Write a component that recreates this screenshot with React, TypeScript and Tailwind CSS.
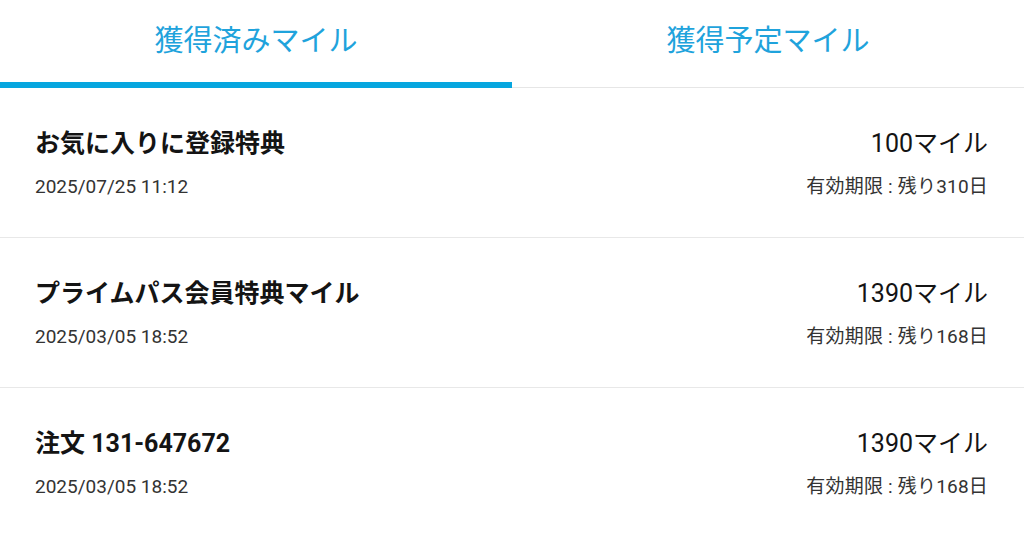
const font = { fontFamily: 'Roboto, "Noto Sans CJK JP", sans-serif' };

interface MileEntry {
  title: string;
  date: string;
  miles: string;
  expiry: string;
}

const entries: MileEntry[] = [
  { title: 'お気に入りに登録特典', date: '2025/07/25 11:12', miles: '100マイル', expiry: '有効期限 : 残り310日' },
  { title: 'プライムパス会員特典マイル', date: '2025/03/05 18:52', miles: '1390マイル', expiry: '有効期限 : 残り168日' },
  { title: '注文 131-647672', date: '2025/03/05 18:52', miles: '1390マイル', expiry: '有効期限 : 残り168日' },
];

function Tabs() {
  return (
    <div className="flex h-[88px]">
      <div className="flex-1 flex flex-col">
        <div className="flex-1 flex items-center justify-center pt-[2px] text-[29px] text-[#1fa3dc]">獲得済みマイル</div>
        <div className="h-[6px] bg-[#06a6df]" />
      </div>
      <div className="flex-1 flex flex-col border-b border-[#e6e6e6]">
        <div className="flex-1 flex items-center justify-center pt-[2px] pb-[5px] text-[29px] text-[#1fa3dc]">獲得予定マイル</div>
      </div>
    </div>
  );
}

function Row({ entry }: { entry: MileEntry }) {
  return (
    <div className="flex justify-between border-b border-[#e8e8e8] pl-[35px] pr-[36px] pt-[40px] pb-[38px]">
      <div className="flex flex-col">
        <div className="text-[25px] leading-[32px] font-bold text-[#141414]">{entry.title}</div>
        <div className="mt-[15px] text-[19px] leading-[24px] text-[#333]">{entry.date}</div>
      </div>
      <div className="flex flex-col items-end">
        <div className="text-[25px] leading-[32px] text-[#141414]">{entry.miles}</div>
        <div className="mt-[15px] text-[19px] leading-[24px] text-[#333] tracking-[0.2px]">{entry.expiry}</div>
      </div>
    </div>
  );
}

export default function App() {
  return (
    <div className="w-[1024px] h-[536px] overflow-hidden bg-white" style={font}>
      <Tabs />
      {entries.map((e, i) => (
        <Row key={i} entry={e} />
      ))}
    </div>
  );
}
